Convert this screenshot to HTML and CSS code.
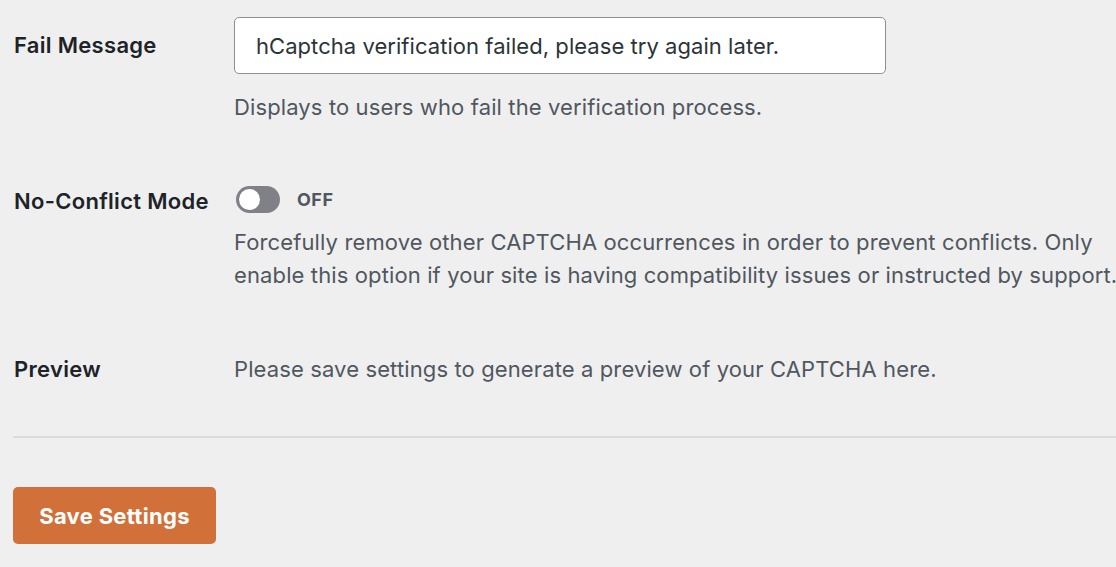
FILE: index.html
```html
<!DOCTYPE html>
<html lang="en">
<head>
<meta charset="utf-8">
<title>hCaptcha Settings</title>
<link rel="stylesheet" href="styles.css">
</head>
<body>
<div class="page">
  <div class="field field-fail">
    <div class="label label-input">Fail Message</div>
    <div class="control">
      <input class="text-input" type="text" value="hCaptcha verification failed, please try again later.">
      <p class="desc desc-fail">Displays to users who fail the verification process.</p>
    </div>
  </div>

  <div class="field field-conflict">
    <div class="label">No-Conflict Mode</div>
    <div class="control">
      <div class="toggle-row">
        <span class="toggle"><span class="knob"></span></span>
        <span class="toggle-text">OFF</span>
      </div>
      <p class="desc desc-conflict">Forcefully remove other CAPTCHA occurrences in order to prevent conflicts. Only<br>enable this option if your site is having compatibility issues or instructed by support.</p>
    </div>
  </div>

  <div class="field field-preview">
    <div class="label">Preview</div>
    <div class="control">
      <p class="desc">Please save settings to generate a preview of your CAPTCHA here.</p>
    </div>
  </div>

  <div class="divider"></div>

  <button class="save-btn" type="button">Save Settings</button>
</div>
</body>
</html>
```
FILE: styles.css
```css
html, body {
  margin: 0;
  padding: 0;
  background: #efeff0;
}
body {
  font-family: Inter, "Noto Sans", "Liberation Sans", sans-serif;
  font-size: 22px;
  letter-spacing: 0.12px;
  color: #1d2327;
  overflow: hidden;
}
.page {
  padding: 17px 0 0 13px;
}
.field {
  display: flex;
  align-items: flex-start;
}
.label {
  width: 220px;
  padding-left: 1px;
  flex: none;
  font-weight: 600;
  letter-spacing: 0.3px;
  line-height: 33px;
  color: #1d2327;
  white-space: nowrap;
}
.label-input {
  line-height: 57px;
}
.control {
  flex: 1;
  min-width: 0;
}
.text-input {
  display: block;
  box-sizing: border-box;
  width: 652px;
  height: 57px;
  margin: 0;
  padding: 0 21px;
  border: 1px solid #8c8f94;
  border-radius: 5px;
  background: #fff;
  font-family: inherit;
  font-size: 22px;
  letter-spacing: 0.05px;
  color: #2c3338;
  outline: none;
}
.desc {
  margin: 0;
  line-height: 33px;
  color: #50575e;
  white-space: nowrap;
}
.desc-fail {
  margin-top: 17px;
}
.field-conflict {
  margin-top: 61px;
}
.toggle-row {
  display: flex;
  align-items: center;
  height: 27px;
  margin-top: 1px;
  padding-left: 2px;
}
.toggle {
  position: relative;
  box-sizing: border-box;
  width: 44px;
  height: 27px;
  border-radius: 14px;
  background: #7f8187;
  flex: none;
}
.knob {
  position: absolute;
  left: 3px;
  top: 3px;
  width: 21px;
  height: 21px;
  border-radius: 50%;
  background: #fff;
}
.toggle-text {
  margin-left: 17px;
  font-size: 18px;
  font-weight: 700;
  color: #50575e;
  letter-spacing: 0.5px;
}
.desc-conflict {
  margin-top: 13px;
}
.field-preview {
  margin-top: 61px;
}
.divider {
  margin-top: 50px;
  height: 2px;
  background: #dcdcde;
}
.save-btn {
  display: block;
  margin-top: 49px;
  width: 203px;
  height: 57px;
  padding: 0;
  border: none;
  border-radius: 5px;
  background: #d2703a;
  color: #fff;
  font-family: inherit;
  font-size: 22px;
  font-weight: 700;
  letter-spacing: 0.3px;
  cursor: pointer;
}
```
